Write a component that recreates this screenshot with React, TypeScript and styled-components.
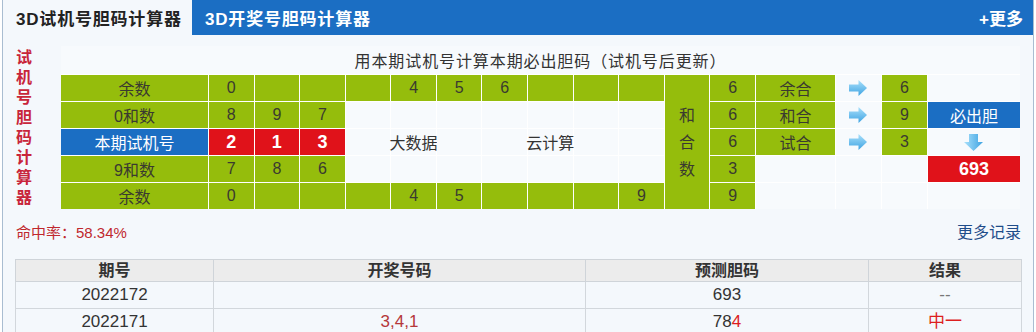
import styled, { createGlobalStyle } from 'styled-components'

const GlobalStyle = createGlobalStyle`
  body {
    margin: 0;
    background: #ffffff;
    font-family: "Liberation Sans", "Noto Sans CJK SC", sans-serif;
  }
`

const Panel = styled.div`
  width: 1032px;
  height: 340px;
  margin-left: 2px;
  box-sizing: border-box;
  border: 1px solid #a9bdd1;
  border-top: none;
  background: #f4f8fc;
  overflow: hidden;
`

const TabBar = styled.div`
  display: flex;
  align-items: center;
  height: 35px;
  background: #1b6ec3;
`

const Tab = styled.div<{ $active?: boolean }>`
  height: 100%;
  display: flex;
  align-items: center;
  box-sizing: border-box;
  width: ${(p) => (p.$active ? '189px' : 'auto')};
  padding-left: 13px;
  background: ${(p) => (p.$active ? '#f4f8fc' : 'transparent')};
  color: ${(p) => (p.$active ? '#222222' : '#ffffff')};
  font-size: 17px;
  font-weight: bold;
  letter-spacing: 0.8px;
`

const MoreLink = styled.div`
  margin-left: auto;
  padding-right: 10px;
  color: #ffffff;
  font-size: 17px;
  font-weight: bold;
`

const Body = styled.div`
  padding: 11px 12px 0 13px;
`

const CalcRow = styled.div`
  display: flex;
`

const VerticalTitle = styled.div`
  width: 45px;
  font-size: 16px;
  font-weight: bold;
  line-height: 20px;
  color: #c8253a;
  padding-top: 2px;
`

const Grid = styled.div`
  display: grid;
  grid-template-columns: 147px repeat(12, 44.58px) 79px 45px 45px 92px;
  grid-template-rows: 28px repeat(5, 26px);
  gap: 1px;
  background: #ffffff;
`

const Caption = styled.div`
  grid-column: 1 / -1;
  display: flex;
  align-items: center;
  justify-content: center;
  background: #f7fafd;
  color: #333333;
  font-size: 16px;
  letter-spacing: 0.9px;
`

type Tone = 'green' | 'blue' | 'red' | 'blank'

const toneBg: Record<Tone, string> = {
  green: '#95bd0c',
  blue: '#1b6ec3',
  red: '#e0121a',
  blank: '#f7fafd',
}

const Cell = styled.div<{ $tone: Tone }>`
  display: flex;
  align-items: center;
  justify-content: center;
  white-space: nowrap;
  overflow: visible;
  background: ${(p) => toneBg[p.$tone]};
  color: ${(p) => (p.$tone === 'green' ? '#3a3a30' : p.$tone === 'blank' ? '#333333' : '#ffffff')};
  font-size: ${(p) => (p.$tone === 'red' ? '18px' : '16px')};
  font-weight: ${(p) => (p.$tone === 'red' ? 'bold' : 'normal')};
`

const SumColumn = styled(Cell)`
  grid-row: span 5;
  flex-direction: column;
  line-height: 27px;
  padding-top: 0;
`

const StatsRow = styled.div`
  display: flex;
  justify-content: space-between;
  align-items: center;
  height: 20px;
  line-height: 20px;
  margin-top: 14px;
`

const HitRate = styled.div`
  color: #c0282e;
  font-size: 15px;
`

const MoreRecords = styled.div`
  color: #1f4d8a;
  font-size: 16px;
`

const History = styled.table`
  width: 1006px;
  margin: 16px 0 0 -1px;
  border-collapse: collapse;
  table-layout: fixed;
`

const Th = styled.th`
  height: 21px;
  padding: 0;
  line-height: 20px;
  background: #ececec;
  border: 1px solid #cfd4d9;
  color: #333333;
  font-size: 16px;
  font-weight: bold;
`

const Td = styled.td`
  height: 26px;
  padding: 0;
  line-height: 20px;
  border: 1px solid #d2d7dc;
  text-align: center;
  color: #333333;
  font-size: 17px;
`

const Hit = styled.span<{ $soft?: boolean }>`
  color: ${(p) => (p.$soft ? '#b5373a' : '#dd1f1f')};
`

const Muted = styled.span`
  color: #777777;
`

const RightArrow = () => (
  <svg width="18" height="16" viewBox="0 0 18 16">
    <defs>
      <linearGradient id="ra" x1="0" y1="0" x2="0" y2="1">
        <stop offset="0" stopColor="#a9e0fb" />
        <stop offset="1" stopColor="#3ea3e2" />
      </linearGradient>
    </defs>
    <path d="M0 4.5 H9.5 V0 L18 8 L9.5 16 V11.5 H0 Z" fill="url(#ra)" />
  </svg>
)

const DownArrow = () => (
  <svg width="19" height="17" viewBox="0 0 19 17">
    <defs>
      <linearGradient id="da" x1="0" y1="0" x2="1" y2="0">
        <stop offset="0" stopColor="#a9e0fb" />
        <stop offset="1" stopColor="#3ea3e2" />
      </linearGradient>
    </defs>
    <path d="M5 0 H14 V8 H19 L9.5 17 L0 8 H5 Z" fill="url(#da)" />
  </svg>
)

const edgeRow1 = ['0', '', '', '', '4', '5', '6', '', '', '']
const edgeRow5 = ['0', '', '', '', '4', '5', '', '', '', '9']

const NumCells = ({ values, tone }: { values: string[]; tone: Tone }) => (
  <>
    {values.map((v, i) => (
      <Cell key={i} $tone={tone}>
        {v}
      </Cell>
    ))}
  </>
)

const Blanks = ({ n }: { n: number }) => (
  <>
    {Array.from({ length: n }).map((_, i) => (
      <Cell key={i} $tone="blank" />
    ))}
  </>
)

const history = [
  { issue: '2022172', draw: '', predict: <>693</>, result: <Muted>--</Muted> },
  {
    issue: '2022171',
    draw: '3,4,1',
    predict: (
      <>
        78<Hit>4</Hit>
      </>
    ),
    result: <Hit>中一</Hit>,
  },
]

const App = () => {
  return (
    <Panel>
      <GlobalStyle />
      <TabBar>
        <Tab $active>3D试机号胆码计算器</Tab>
        <Tab>3D开奖号胆码计算器</Tab>
        <MoreLink>+更多</MoreLink>
      </TabBar>
      <Body>
        <CalcRow>
          <VerticalTitle>
            {'试机号胆码计算器'.split('').map((c) => (
              <div key={c}>{c}</div>
            ))}
          </VerticalTitle>
          <Grid>
            <Caption>用本期试机号计算本期必出胆码（试机号后更新）</Caption>

            <Cell $tone="green">余数</Cell>
            <NumCells values={edgeRow1} tone="green" />
            <SumColumn $tone="green">
              <span>和</span>
              <span>合</span>
              <span>数</span>
            </SumColumn>
            <Cell $tone="green">6</Cell>
            <Cell $tone="green">余合</Cell>
            <Cell $tone="blank">
              <RightArrow />
            </Cell>
            <Cell $tone="green">6</Cell>
            <Cell $tone="blank" />

            <Cell $tone="green">0和数</Cell>
            <NumCells values={['8', '9', '7']} tone="green" />
            <Blanks n={7} />
            <Cell $tone="green">6</Cell>
            <Cell $tone="green">和合</Cell>
            <Cell $tone="blank">
              <RightArrow />
            </Cell>
            <Cell $tone="green">9</Cell>
            <Cell $tone="blue">必出胆</Cell>

            <Cell $tone="blue">本期试机号</Cell>
            <NumCells values={['2', '1', '3']} tone="red" />
            <Cell $tone="blank" />
            <Cell $tone="blank">大数据</Cell>
            <Blanks n={2} />
            <Cell $tone="blank">云计算</Cell>
            <Blanks n={2} />
            <Cell $tone="green">6</Cell>
            <Cell $tone="green">试合</Cell>
            <Cell $tone="blank">
              <RightArrow />
            </Cell>
            <Cell $tone="green">3</Cell>
            <Cell $tone="blank">
              <DownArrow />
            </Cell>

            <Cell $tone="green">9和数</Cell>
            <NumCells values={['7', '8', '6']} tone="green" />
            <Blanks n={7} />
            <Cell $tone="green">3</Cell>
            <Blanks n={3} />
            <Cell $tone="red">693</Cell>

            <Cell $tone="green">余数</Cell>
            <NumCells values={edgeRow5} tone="green" />
            <Cell $tone="green">9</Cell>
            <Blanks n={4} />
          </Grid>
        </CalcRow>

        <StatsRow>
          <HitRate>命中率：58.34%</HitRate>
          <MoreRecords>更多记录</MoreRecords>
        </StatsRow>

        <History>
          <colgroup>
            <col style={{ width: 198 }} />
            <col style={{ width: 372 }} />
            <col style={{ width: 283 }} />
            <col style={{ width: 153 }} />
          </colgroup>
          <thead>
            <tr>
              <Th>期号</Th>
              <Th>开奖号码</Th>
              <Th>预测胆码</Th>
              <Th>结果</Th>
            </tr>
          </thead>
          <tbody>
            {history.map((h) => (
              <tr key={h.issue}>
                <Td>{h.issue}</Td>
                <Td>
                  <Hit $soft>{h.draw}</Hit>
                </Td>
                <Td>{h.predict}</Td>
                <Td>{h.result}</Td>
              </tr>
            ))}
          </tbody>
        </History>
      </Body>
    </Panel>
  )
}

export default App
